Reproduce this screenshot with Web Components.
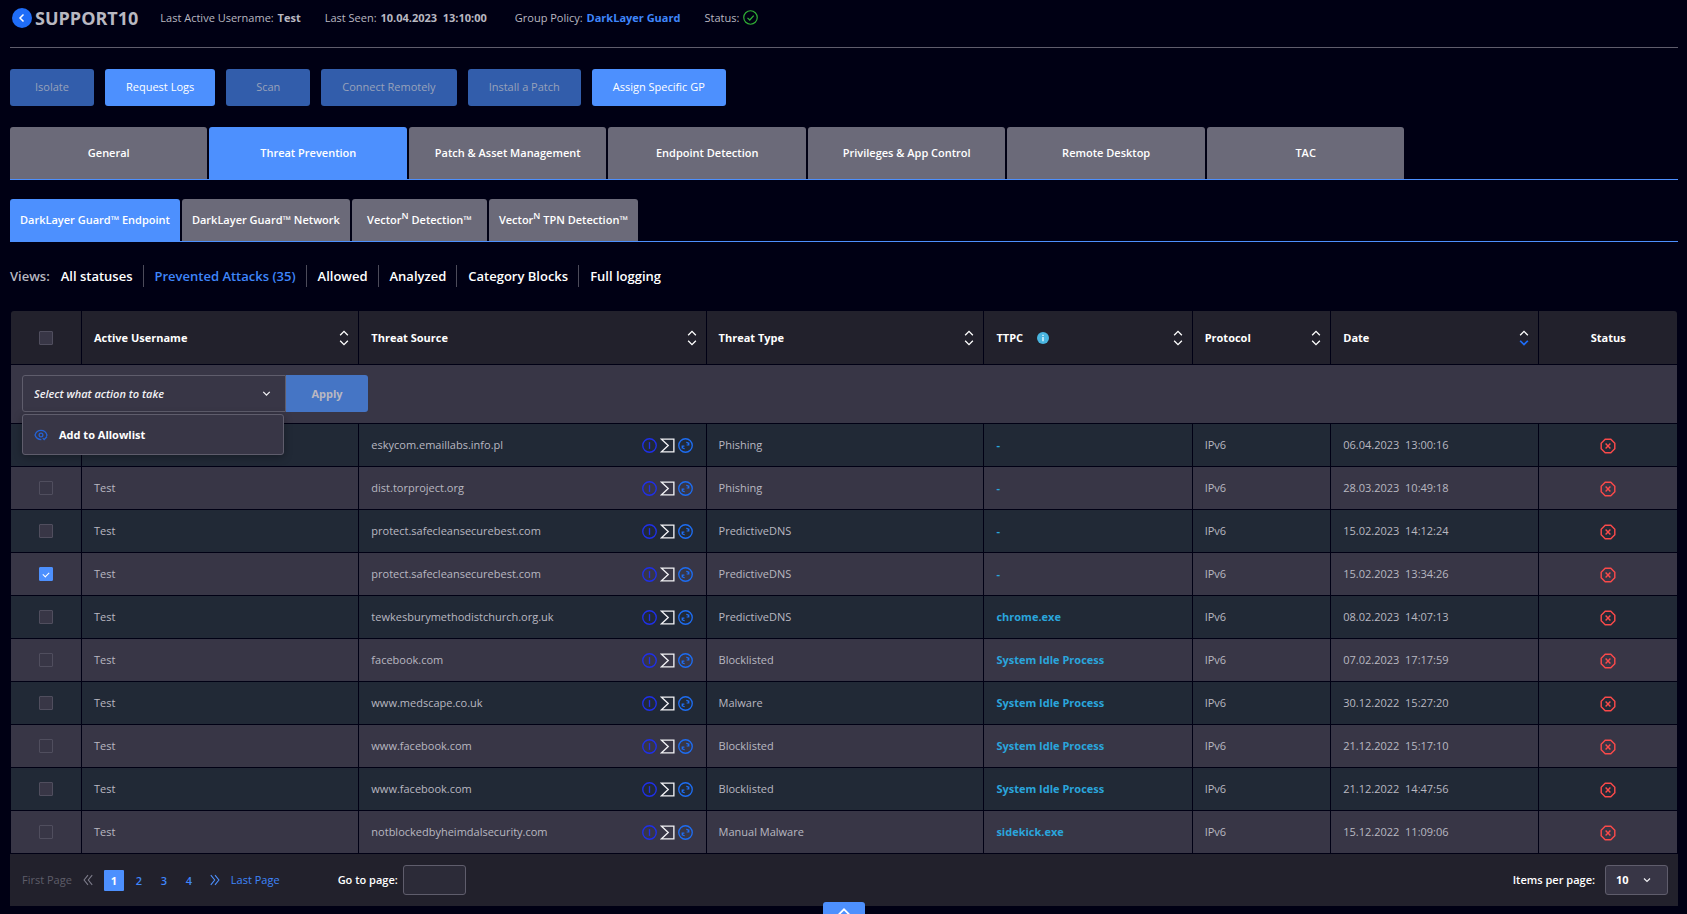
<!DOCTYPE html>
<html lang="en">
<head>
<meta charset="utf-8">
<title>SUPPORT10 - Threat Prevention</title>
<style>
    html {
        height: 100%;
        overflow: hidden;
        background: #000014;
    }
    body {
        margin: 0;
        font-family: "Open Sans", "Noto Sans", sans-serif;
        font-size: 11px;
        line-height: 16px;
        color: #b9b8c1;
        --blue: #4d90fe;
        --link: #3f86fb;
        --line: #000014;
        --panel: #22212c;
        --row: #383646;
        --row-alt: #212936;
        --edge: #5f5d6c;
    }
</style>
</head>
<body>
<endpoint-page></endpoint-page>

<script>
const ICONS = {
    back: '<circle cx="10" cy="10" r="10" fill="#1f6df8"/><path d="M11.5 6.5 8 10l3.5 3.5" stroke="#fff" stroke-width="1.5"/>',
    ok: '<circle cx="10" cy="10" r="9" stroke="#2fae35" stroke-width="1.6"/><path d="M6 10.5 9 13.3 14.3 7.5" stroke="#2fae35" stroke-width="1.7"/>',
    sort: '<path d="M6.500 7.5 10 4l3.5 3.5" stroke="#fff" stroke-width="1.2"/><path d="m6.5 12.5 3.5 3.5 3.5-3.5" stroke="#fff" stroke-width="1.2"/>',
    sortDown: '<path d="M6.5 7.5 10 4l3.5 3.5" stroke="#fff" stroke-width="1.2"/><path d="m6.5 12.5 3.5 3.5 3.5-3.5" stroke="#1f6df8" stroke-width="1.6"/>',
    info: '<circle cx="10" cy="10" r="10" fill="#49b5e0"/><path d="M10 8.5v7M10 4.5v2" stroke="#d9f2fb" stroke-width="2.5"/>',
    detail: '<circle cx="10" cy="10" r="9" stroke="#1f30ea" stroke-width="1.8"/><path d="M10 5.5v9" stroke="#1f30ea" stroke-width="1.8"/>',
    sigma: '<path d="M2 1.5h16.500v17H2L11 10z" stroke="#f1f1f4" stroke-width="1.8"/>',
    scan: '<circle cx="10" cy="10" r="9" stroke="#1e6df2" stroke-width="1.8"/><path d="M11 5.8c2 0 3.300 1.2 3.300 3.200M14.500 6v3.200h-3M9 14.200c-2 0-3.300-1.2-3.300-3.200M5.500 14v-3.200h3" stroke="#1e6df2" stroke-width="1.4"/>',
    blocked: '<path d="M6.5 1.5h7l5 5v7l-5 5h-7l-5-5v-7z" stroke="#fa4a4a" stroke-width="1.8"/><path d="m7 7 6 6m0-6-6 6" stroke="#fa4a4a" stroke-width="1.8"/>',
    eye: '<path d="M10.5 16.5C6 16.5 2.5 13.5 1.5 10 2.8 6 6 3.5 10 3.5s7.2 2.5 8.5 6.5c-.2.8-.5 1.5-1 2.2" stroke="#2563d6" stroke-width="1.8"/><circle cx="10" cy="10" r="2.7" stroke="#2563d6" stroke-width="1.8"/><path d="m12.500 14.5 2 2 4-4" stroke="#2563d6" stroke-width="1.8"/>',
    first: '<path d="M10 2 3.500 10l6.500 8M17 2l-6.500 8 6.500 8" stroke="#7d7c8a" stroke-width="1.8"/>',
    last: '<path d="m3 2 6.500 8L3 18M10 2l6.500 8-6.500 8" stroke="#4d90fe" stroke-width="1.8"/>',
    down: '<path d="m5 7.5 5 5 5-5" stroke="#f1f1f4" stroke-width="2"/>',
    up: '<path d="m4 13 6-6 6 6" stroke="#fff" stroke-width="2"/>',
};

// shared by every element that has controls inside its shadow root
const BASE = `
    *, *::before { box-sizing: border-box; }
    button, input, select { font: inherit; color: inherit; margin: 0; }
    button { border: 0; cursor: pointer; }
    a { text-decoration: none; color: var(--link); }
`;

class BaseElement extends HTMLElement {
    constructor() {
        super();
        this.shadow = this.attachShadow({ mode: 'open' });
    }

    connectedCallback() {
        this.render();
    }
}


class UiIcon extends BaseElement {
    render() {
        const size = this.getAttribute('size') || 15;
        this.shadow.innerHTML = `
        <style>
            :host { display: inline-flex; flex: none; }
            svg { display: block; fill: none; }
        </style>
        <svg width="${size}" height="${size}" viewBox="0 0 20 20" aria-hidden="true">${ICONS[this.getAttribute('name')]}</svg>
        `;
    }
}


class PageHeader extends BaseElement {
    render() {
        this.shadow.innerHTML = `
        <style>
            ${BASE}
            :host {
                display: flex;
                align-items: center;
                height: 48px;
                padding-bottom: 12px;
                box-sizing: border-box;
                border-bottom: 1px solid var(--edge);
            }
            .back { display: flex; padding: 0 2px; background: none; }
            h1 { margin: 0 22px 0 1px; font-size: 18px; line-height: 24px; font-weight: 700; }
            .facts { display: flex; align-items: center; column-gap: 24px; white-space: pre; }
            .facts span { display: flex; align-items: center; column-gap: 1px; }
            .facts .policy { margin-left: 4px; }
            b { font-weight: 700; }
        </style>
        <button class="back" aria-label="Back"><ui-icon name="back" size="20"></ui-icon></button>
        <h1>${this.getAttribute('name')}</h1>
        <div class="facts">
            <span>Last Active Username: <b>Test</b></span>
            <span>Last Seen: <b>10.04.2023&nbsp; 13:10:00</b></span>
            <span class="policy">Group Policy: <a href="#policy"><b>DarkLayer Guard</b></a></span>
            <span>Status: <ui-icon name="ok"></ui-icon></span>
        </div>
        `;
    }
}


class ActionButton extends BaseElement {
    render() {
        this.shadow.innerHTML = `
        <style>
            ${BASE}
            :host { display: block; }
            button {
                min-width: 84px;
                height: 37px;
                padding: 0 21px 2px;
                border-radius: 3px;
                background: var(--blue);
                color: #fff;
            }
            button:disabled { background: #325dab; color: #98a2ba; cursor: default; }
        </style>
        <button ${this.hasAttribute('disabled') ? 'disabled' : ''}><slot></slot></button>
        `;
    }
}


class TabBar extends BaseElement {
    render() {
        this.shadow.innerHTML = `
        <style>
            :host {
                display: flex;
                column-gap: 2px;
                border-bottom: 1px solid var(--blue);
            }
        </style>
        <slot></slot>
        `;
    }
}


class TabItem extends BaseElement {
    render() {
        this.shadow.innerHTML = `
        <style>
            ${BASE}
            :host { display: block; flex: 0 0 11.84%; }
            :host([small]) { flex: none; }
            button {
                width: 100%;
                height: 52px;
                padding: 0 10px;
                border-radius: 3px 3px 0 0;
                background: #6b6a79;
                color: #fff;
                font-weight: 600;
                white-space: nowrap;
            }
            :host([small]) button { width: auto; min-width: 135px; height: 42px; }
            :host([selected]) button { background: var(--blue); }
        </style>
        <button ${this.hasAttribute('selected') ? 'aria-current="true"' : ''}><slot></slot></button>
        `;
    }
}


class ViewFilter extends BaseElement {
    render() {
        const views = ['All statuses', 'Prevented Attacks (35)', 'Allowed', 'Analyzed', 'Category Blocks', 'Full logging'];
        this.shadow.innerHTML = `
        <style>
            ${BASE}
            :host { display: flex; align-items: center; font-size: 13px; font-weight: 600; line-height: 22px; }
            button { padding: 0 10px 0 11px; background: none; color: #fff; border-right: 1px solid #4c4b5a; }
            button:last-child { border-right: 0; }
            button.selected { color: var(--link); }
        </style>
        <span>Views:</span>
        ${views.map((view, i) => `<button class="${i == 1 ? 'selected' : ''}">${view}</button>`).join('')}
        `;
    }
}


class ActionPicker extends BaseElement {
    render() {
        this.shadow.innerHTML = `
        <style>
            ${BASE}
            :host { display: flex; position: relative; padding: 10px 11px 11px; }
            .field {
                display: flex;
                align-items: center;
                width: 264px;
                height: 37px;
                padding-right: 12px;
                border: 1px solid var(--edge);
                border-radius: 3px 0 0 3px;
            }
            select {
                flex: 1;
                height: 100%;
                padding: 0 11px;
                border: 0;
                background: none;
                appearance: none;
                color: #f1f1f4;
                font-style: italic;
                font-weight: 600;
            }
            .apply {
                width: 82px;
                border-radius: 0 3px 3px 0;
                background: #4575c5;
                color: #b9b8c1;
                font-weight: 700;
            }
            .menu {
                position: absolute;
                z-index: 1;
                top: 49px;
                left: 11px;
                width: 262px;
                border: 1px solid var(--edge);
                border-radius: 3px;
                background: var(--row);
                box-shadow: 0 2px 8px rgba(0, 0, 0, 0.3);
            }
            .menu button {
                display: flex;
                align-items: center;
                column-gap: 11px;
                width: 100%;
                height: 39px;
                padding: 0 11px;
                background: none;
                color: #fff;
                font-weight: 700;
            }
        </style>
        <div class="field">
            <select aria-label="Action"><option>Select what action to take</option></select>
            <ui-icon name="down" size="13"></ui-icon>
        </div>
        <button class="apply">Apply</button>
        <div class="menu">
            <button><ui-icon name="eye" size="14"></ui-icon>Add to Allowlist</button>
        </div>
        `;
    }
}


class ThreatTable extends BaseElement {
    render() {
        const columns = ['Active Username', 'Threat Source', 'Threat Type', 'TTPC', 'Protocol', 'Date'];
        const rows = [
            ['', 'eskycom.emaillabs.info.pl', 'Phishing', '-', '06.04.2023', '13:00:16'],
            ['Test', 'dist.torproject.org', 'Phishing', '-', '28.03.2023', '10:49:18'],
            ['Test', 'protect.safecleansecurebest.com', 'PredictiveDNS', '-', '15.02.2023', '14:12:24'],
            ['Test', 'protect.safecleansecurebest.com', 'PredictiveDNS', '-', '15.02.2023', '13:34:26'],
            ['Test', 'tewkesburymethodistchurch.org.uk', 'PredictiveDNS', 'chrome.exe', '08.02.2023', '14:07:13'],
            ['Test', 'facebook.com', 'Blocklisted', 'System Idle Process', '07.02.2023', '17:17:59'],
            ['Test', 'www.medscape.co.uk', 'Malware', 'System Idle Process', '30.12.2022', '15:27:20'],
            ['Test', 'www.facebook.com', 'Blocklisted', 'System Idle Process', '21.12.2022', '15:17:10'],
            ['Test', 'www.facebook.com', 'Blocklisted', 'System Idle Process', '21.12.2022', '14:47:56'],
            ['Test', 'notblockedbyheimdalsecurity.com', 'Manual Malware', 'sidekick.exe', '15.12.2022', '11:09:06'],
        ];
        const checked = 3;

        this.shadow.innerHTML = `
        <style>
            ${BASE}
            :host { display: block; padding: 0 1px; }
            table { width: 100%; table-layout: fixed; border-collapse: separate; border-spacing: 0; }
            th, td {
                height: 43px;
                padding: 0 12px;
                text-align: left;
                border-right: 1px solid var(--line);
                border-bottom: 1px solid var(--line);
                white-space: nowrap;
            }
            th:last-child, td:last-child { border-right: 0; }
            thead th { height: 54px; background: var(--panel); color: #fff; font-weight: 700; }
            thead th:first-child { border-top-left-radius: 3px; }
            thead th:last-child { border-top-right-radius: 3px; }
            .tools { height: 59px; padding: 0; background: var(--row); }
            tbody tr { background: var(--row); }
            tbody tr:nth-child(odd) { background: var(--row-alt); }
            .cell { display: flex; align-items: center; justify-content: space-between; }
            .label { display: flex; align-items: center; column-gap: 14px; }
            .sort { display: flex; margin-right: -9px; padding: 0; background: none; }
            .icons { display: flex; column-gap: 3px; margin-right: 1px; }
            .center { text-align: center; }
            .center ui-icon { vertical-align: middle; }
            .ttpc { font-weight: 700; color: #2aa5dc; }
            input {
                display: block;
                width: 14px;
                height: 14px;
                margin: 0 auto;
                appearance: none;
                border: 1px solid #504e5e;
                border-radius: 1px;
                background: var(--row);
            }
            input:checked {
                display: grid;
                place-items: center;
                border-color: var(--blue);
                background: var(--blue);
            }
            input:checked::before {
                content: "";
                width: 6px;
                height: 4px;
                border: solid #fff;
                border-width: 0 0 1px 1px;
                transform: rotate(-45deg);
            }
        </style>
        <table>
            <colgroup>
                <col style="width: 4.26%"><col style="width: 16.65%"><col style="width: 20.84%"><col style="width: 16.68%">
                <col style="width: 12.5%"><col style="width: 8.32%"><col style="width: 12.49%"><col style="width: 8.26%">
            </colgroup>
            <thead>
                <tr>
                    <th><input type="checkbox" aria-label="Select all"></th>
                    ${columns.map(name => `
                    <th><div class="cell">
                        <span class="label">${name}${name == 'TTPC' ? '<ui-icon name="info" size="12"></ui-icon>' : ''}</span>
                        <button class="sort" aria-label="Sort by ${name}"><ui-icon name="${name == 'Date' ? 'sortDown' : 'sort'}" size="22"></ui-icon></button>
                    </div></th>`).join('')}
                    <th class="center">Status</th>
                </tr>
                <tr><td class="tools" colspan="8"><action-picker></action-picker></td></tr>
            </thead>
            <tbody>
                ${rows.map(([user, source, type, ttpc, date, time], i) => `
                <tr>
                    <td><input type="checkbox" aria-label="Select ${source}" ${i == checked ? 'checked' : ''}></td>
                    <td>${user}</td>
                    <td><div class="cell">${source}<span class="icons">
                        <ui-icon name="detail"></ui-icon><ui-icon name="sigma"></ui-icon><ui-icon name="scan"></ui-icon>
                    </span></div></td>
                    <td>${type}</td>
                    <td>${ttpc == '-' ? '<span class="ttpc">-</span>' : `<a class="ttpc" href="#process">${ttpc}</a>`}</td>
                    <td>IPv6</td>
                    <td>${date}&nbsp; ${time}</td>
                    <td class="center"><ui-icon name="blocked" size="16"></ui-icon></td>
                </tr>`).join('')}
            </tbody>
        </table>
        `;
    }
}


class TablePager extends BaseElement {
    render() {
        this.shadow.innerHTML = `
        <style>
            ${BASE}
            :host {
                display: flex;
                align-items: center;
                justify-content: space-between;
                height: 52px;
                padding: 0 10px 0 12px;
                background: var(--panel);
            }
            nav, .goto, .size { display: flex; align-items: center; }
            nav { font-weight: 500; }
            .off { color: #5e5d69; }
            .arrow { display: flex; margin: 0 10px; }
            .pages { display: flex; column-gap: 5px; font-weight: 600; }
            .pages a { width: 20px; line-height: 21px; text-align: center; border-radius: 1px; }
            .pages a.current { background: var(--blue); color: #fff; font-weight: 700; }
            .goto { margin-left: 58px; column-gap: 5px; }
            .left { display: flex; align-items: center; }
            label { color: #fff; font-weight: 600; }
            input, .select {
                width: 63px;
                height: 30px;
                border: 1px solid var(--edge);
                border-radius: 3px;
                background: #2c2b38;
            }
            .size { column-gap: 10px; }
            .select { display: flex; align-items: center; padding-right: 14px; background: var(--row); }
            select { flex: 1; min-width: 0; height: 100%; padding: 0 0 0 10px; border: 0; background: none; appearance: none; color: #fff; font-weight: 700; }
        </style>
        <div class="left">
            <nav aria-label="Pages">
                <span class="off">First Page</span>
                <span class="arrow"><ui-icon name="first" size="12"></ui-icon></span>
                <span class="pages">
                    <a class="current" href="#1">1</a><a href="#2">2</a><a href="#3">3</a><a href="#4">4</a>
                </span>
                <a class="arrow" href="#next" aria-label="Next page"><ui-icon name="last" size="12"></ui-icon></a>
                <a href="#last">Last Page</a>
            </nav>
            <div class="goto">
                <label for="page">Go to page:</label>
                <input id="page" type="text">
            </div>
        </div>
        <div class="size">
            <label for="size">Items per page:</label>
            <span class="select">
                <select id="size"><option>10</option></select>
                <ui-icon name="down" size="12"></ui-icon>
            </span>
        </div>
        `;
    }
}


class EndpointPage extends BaseElement {
    render() {
        this.shadow.innerHTML = `
        <style>
            ${BASE}
            :host { display: block; padding: 0 9px 0 10px; }
            .actions { display: flex; column-gap: 11px; margin: 21px 0; }
            .main-tabs { margin-bottom: 19px; }
            view-filter { margin: 23px 0 24px; }
            sup { font-size: 9px; line-height: 0; }
            .drawer {
                position: fixed;
                left: 50%;
                bottom: 0;
                width: 42px;
                height: 12px;
                margin-left: -21px;
                padding: 1px 0 0;
                display: flex;
                align-items: flex-start;
                justify-content: center;
                overflow: hidden;
                border-radius: 3px 3px 0 0;
                background: var(--blue);
            }
        </style>
        <page-header name="SUPPORT10"></page-header>
        <div class="actions">
            <action-button disabled>Isolate</action-button>
            <action-button>Request Logs</action-button>
            <action-button disabled>Scan</action-button>
            <action-button disabled>Connect Remotely</action-button>
            <action-button disabled>Install a Patch</action-button>
            <action-button>Assign Specific GP</action-button>
        </div>
        <tab-bar class="main-tabs">
            <tab-item>General</tab-item>
            <tab-item selected>Threat Prevention</tab-item>
            <tab-item>Patch &amp; Asset Management</tab-item>
            <tab-item>Endpoint Detection</tab-item>
            <tab-item>Privileges &amp; App Control</tab-item>
            <tab-item>Remote Desktop</tab-item>
            <tab-item>TAC</tab-item>
        </tab-bar>
        <tab-bar>
            <tab-item small selected>DarkLayer Guard™ Endpoint</tab-item>
            <tab-item small>DarkLayer Guard™ Network</tab-item>
            <tab-item small>Vector<sup>N</sup> Detection™</tab-item>
            <tab-item small>Vector<sup>N</sup> TPN Detection™</tab-item>
        </tab-bar>
        <view-filter></view-filter>
        <threat-table></threat-table>
        <table-pager></table-pager>
        <button class="drawer" aria-label="Open panel"><ui-icon name="up" size="18"></ui-icon></button>
        `;
    }
}

customElements.define('ui-icon', UiIcon);
customElements.define('page-header', PageHeader);
customElements.define('action-button', ActionButton);
customElements.define('tab-bar', TabBar);
customElements.define('tab-item', TabItem);
customElements.define('view-filter', ViewFilter);
customElements.define('action-picker', ActionPicker);
customElements.define('threat-table', ThreatTable);
customElements.define('table-pager', TablePager);
customElements.define('endpoint-page', EndpointPage);
</script>
</body>
</html>
